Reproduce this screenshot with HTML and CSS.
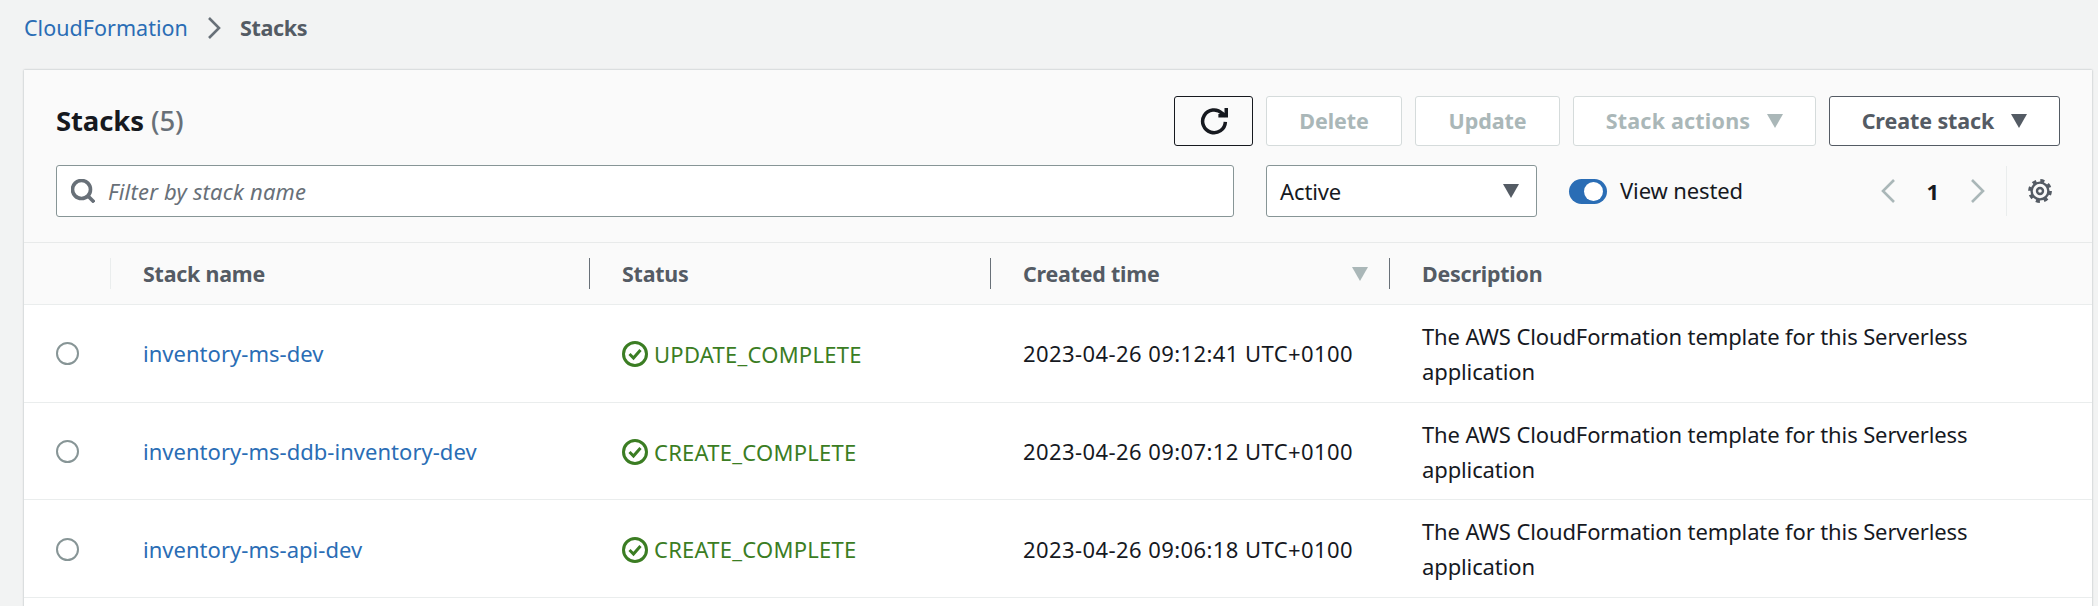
FILE: index.html
```html
<!DOCTYPE html>
<html lang="en">
<head>
<meta charset="utf-8">
<title>Stacks</title>
<link rel="stylesheet" href="styles.css">
</head>
<body>
<nav class="crumbs">
  <a class="link" href="#">CloudFormation</a>
  <svg class="crumb-sep" viewBox="0 0 16 24"><path d="M3 2l10 10L3 22"/></svg>
  <span class="crumb-current">Stacks</span>
</nav>
<main class="panel">
  <header class="head">
    <div class="row-top">
      <h1 class="title">Stacks <span class="count">(5)</span></h1>
      <div class="actions">
        <button class="btn btn-icon"><svg class="refresh" viewBox="0 0 16 16"><path d="M10.5 5H15V.5"/><path d="M14.5 8.5A6.5 6.5 0 1 1 12.6 3.6L14.6 5"/></svg></button>
        <button class="btn off w-delete">Delete</button>
        <button class="btn off w-update">Update</button>
        <button class="btn off w-actions"><span class="wide">Stack actions</span><i class="caret caret-off"></i></button>
        <button class="btn on w-create">Create stack<i class="caret"></i></button>
      </div>
    </div>
    <div class="row-filter">
      <label class="search">
        <svg class="mag" viewBox="0 0 16 16"><circle cx="7" cy="7" r="6"/><path d="M11.3 11.3L15.5 15.5"/></svg>
        <span class="placeholder">Filter by stack name</span>
      </label>
      <div class="select">Active<i class="caret"></i></div>
      <div class="toggle"><span class="track"><span class="thumb"></span></span><span class="toggle-label">View nested</span></div>
      <div class="pager">
        <svg class="chev" viewBox="0 0 16 24"><path d="M14 1L3 12l11 11"/></svg>
        <span class="page">1</span>
        <svg class="chev" viewBox="0 0 16 24"><path d="M2 1l11 11L2 23"/></svg>
      </div>
      <div class="prefs">
        <svg class="gear" viewBox="0 0 24 26"><circle class="gear-body" cx="12" cy="13" r="8.4"/><circle class="gear-teeth" cx="12" cy="13" r="10.4"/><circle class="gear-hub" cx="12" cy="13" r="3"/></svg>
      </div>
    </div>
  </header>
  <div class="grid thead">
    <div class="th th-first"></div>
    <div class="th th-name">Stack name</div>
    <div class="th">Status</div>
    <div class="th th-sort">Created time<i class="caret caret-off"></i></div>
    <div class="th th-last">Description</div>
  </div>
  <div class="grid tr">
    <div class="td"><span class="radio"></span></div>
    <div class="td"><a class="link" href="#">inventory-ms-dev</a></div>
    <div class="td status"><svg class="ok" viewBox="0 0 26 26"><circle cx="13" cy="13" r="11.5"/><path d="M7.5 13l4 4 7-8"/></svg>UPDATE_COMPLETE</div>
    <div class="td time">2023-04-26 09:12:41 UTC+0100</div>
    <div class="td desc">The AWS CloudFormation template for this Serverless application</div>
  </div>
  <div class="grid tr">
    <div class="td"><span class="radio"></span></div>
    <div class="td"><a class="link" href="#">inventory-ms-ddb-inventory-dev</a></div>
    <div class="td status"><svg class="ok" viewBox="0 0 26 26"><circle cx="13" cy="13" r="11.5"/><path d="M7.5 13l4 4 7-8"/></svg>CREATE_COMPLETE</div>
    <div class="td time">2023-04-26 09:07:12 UTC+0100</div>
    <div class="td desc">The AWS CloudFormation template for this Serverless application</div>
  </div>
  <div class="grid tr">
    <div class="td"><span class="radio"></span></div>
    <div class="td"><a class="link" href="#">inventory-ms-api-dev</a></div>
    <div class="td status"><svg class="ok" viewBox="0 0 26 26"><circle cx="13" cy="13" r="11.5"/><path d="M7.5 13l4 4 7-8"/></svg>CREATE_COMPLETE</div>
    <div class="td time">2023-04-26 09:06:18 UTC+0100</div>
    <div class="td desc">The AWS CloudFormation template for this Serverless application</div>
  </div>
</main>
</body>
</html>
```
FILE: styles.css
```css
* { box-sizing: border-box; }
html, body { margin: 0; height: 606px; overflow: hidden; }
body {
  background: #f2f3f3;
  color: #16191f;
  font-family: "Noto Sans", "Open Sans", sans-serif;
  font-size: 22px;
  font-weight: 450;
  line-height: 35px;
  letter-spacing: -.12px;
}
.link { color: #2a6db5; text-decoration: none; letter-spacing: .03px; }
.crumbs { height: 70px; padding: 10px 0 0 24px; display: flex; align-items: flex-start; gap: 18px; font-size: 21.5px; }
.crumb-sep { width: 16px; height: 24px; margin-top: 6px; }
.crumb-sep path { fill: none; stroke: #687078; stroke-width: 2.6; }
.crumb-current { color: #545b64; font-weight: 700; letter-spacing: -.3px; }
.panel {
  margin: 0 6px 0 24px;
  height: 600px;
  background: #fff;
  box-shadow: 0 0 2px rgba(0, 28, 36, .3);
}
.head { background: #fafafa; padding: 26px 32px 25px; border-bottom: 1px solid #e8eaea; height: 173px; }
.row-top { display: flex; justify-content: space-between; align-items: center; height: 50px; }
.title { margin: 0; font-size: 27.5px; font-weight: 700; line-height: 40px; }
.count { color: #687078; font-weight: 500; }
.actions { display: flex; gap: 13px; }
.btn {
  height: 50px;
  font: 700 21.5px/30px "Noto Sans", sans-serif;
  letter-spacing: -.1px;
  border: 1px solid #545b64;
  border-radius: 3px;
  background: #fff;
  color: #545b64;
  padding: 0;
  display: flex;
  align-items: center;
  justify-content: center;
}
.wide { letter-spacing: .2px; }
.btn-icon { width: 79px; background: #fafafa; border-color: #16191f; }
.refresh { width: 28px; height: 28px; }
.refresh path { fill: none; stroke: #16191f; stroke-width: 2; }
.off { border-color: #d5dbdb; color: #aab7b8; }
.w-delete { width: 136px; }
.w-update { width: 145px; }
.w-actions { width: 243px; }
.w-create { width: 231px; }
.caret {
  display: inline-block;
  width: 0;
  height: 0;
  margin-left: 17px;
  border: 8.5px solid transparent;
  border-top: 14px solid #545b64;
  border-bottom: 0;
}
.caret-off { border-top-color: #aab7b8; }
.row-filter { display: flex; align-items: center; margin-top: 19px; height: 52px; }
.search {
  width: 1178px;
  height: 52px;
  background: #fff;
  border: 1px solid #879596;
  border-radius: 3px;
  display: flex;
  align-items: center;
  padding-left: 14px;
  gap: 13px;
}
.mag { width: 24px; height: 24px; }
.mag circle, .mag path { fill: none; stroke: #687078; stroke-width: 2.4; }
.placeholder { color: #687078; font-style: italic; letter-spacing: .2px; }
.select {
  width: 271px;
  height: 52px;
  margin-left: 32px;
  background: #fff;
  border: 1px solid #879596;
  border-radius: 3px;
  display: flex;
  align-items: center;
  justify-content: space-between;
  padding: 0 17px 0 13px;
}
.toggle { margin-left: 32px; display: flex; align-items: center; gap: 13px; }
.toggle-label { position: relative; top: -1px; }
.track { width: 38px; height: 25px; border-radius: 13px; background: #2a6db5; display: block; padding: 3px 3px 3px 15px; }
.thumb { display: block; width: 19px; height: 19px; border-radius: 50%; background: #fff; }
.pager { margin-left: auto; display: flex; align-items: center; gap: 31px; }
.chev { width: 16px; height: 24px; }
.chev path { fill: none; stroke: #aab7b8; stroke-width: 2.6; }
.page { font-weight: 700; }
.prefs { margin-left: 20px; border-left: 1px solid #eaeded; height: 50px; padding: 12px 0 0 21px; margin-right: 8px; }
.gear { width: 24px; height: 26px; display: block; }
.gear-body { fill: none; stroke: #545b64; stroke-width: 2.4; }
.gear-teeth { fill: none; stroke: #545b64; stroke-width: 3; stroke-dasharray: 4.08 4.09; }
.gear-hub { fill: none; stroke: #545b64; stroke-width: 2.4; }
.grid { display: grid; grid-template-columns: 86px 479px 401px 399px 1fr; }
.thead { background: #fafafa; height: 62px; border-bottom: 1px solid #eaeded; align-items: center; }
.th { font-size: 21.4px; font-weight: 700; color: #545b64; height: 31px; line-height: 31px; padding-left: 32px; border-left: 1px solid #687078; letter-spacing: -.2px; }
.th-first { border-left: 0; }
.th-name { border-left-color: #eaeded; }
.th-sort { display: flex; justify-content: space-between; align-items: center; padding-right: 21px; }
.tr { height: 97.7px; border-bottom: 1px solid #eaeded; align-items: center; }
.td { padding-left: 33px; padding-top: 1px; }
.td:first-child { padding-left: 32px; padding-top: 1px; line-height: 0; }
.radio { display: inline-block; width: 23px; height: 23px; border-radius: 50%; border: 2px solid #879596; background: #fff; }
.status { display: flex; align-items: center; color: #3b7d23; gap: 6px; letter-spacing: .25px; padding-top: 2px; }
.time { letter-spacing: .42px; }
.ok { width: 26px; height: 26px; }
.ok circle, .ok path { fill: none; stroke: #3b7d23; stroke-width: 3; }
.desc { padding-right: 90px; }
```
